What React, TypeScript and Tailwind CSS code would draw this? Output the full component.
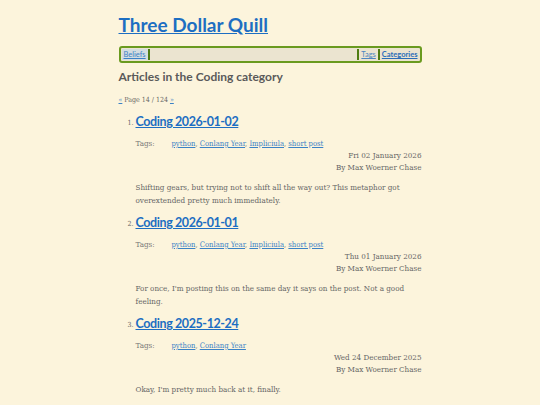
import React from "react";

const heading = { fontFamily: 'Lato, "Open Sans", sans-serif' };
const body = { fontFamily: '"DejaVu Serif Condensed", "DejaVu Serif", serif' };

const posts = [
  {
    title: "Coding 2026-01-02",
    tags: ["python", "Conlang Year", "Impliciula", "short post"],
    date: "Fri 02 January 2026",
    summary:
      "Shifting gears, but trying not to shift all the way out? This metaphor got overextended pretty much immediately.",
  },
  {
    title: "Coding 2026-01-01",
    tags: ["python", "Conlang Year", "Impliciula", "short post"],
    date: "Thu 01 January 2026",
    summary:
      "For once, I'm posting this on the same day it says on the post. Not a good feeling.",
  },
  {
    title: "Coding 2025-12-24",
    tags: ["python", "Conlang Year"],
    date: "Wed 24 December 2025",
    summary: "Okay, I'm pretty much back at it, finally.",
  },
];

function Post({ post, n }: { post: (typeof posts)[number]; n: number }) {
  return (
    <li className="flex">
      <span className="w-[17px] shrink-0 pt-[6px] text-right pr-[2px] text-[7px] text-[#666]" style={body}>
        {n}.
      </span>
      <div className="flex-1">
        <a
          href="#"
          className="block text-[12.5px] font-bold leading-[20px] tracking-[-0.4px] text-[#1d6ec2] underline"
          style={heading}
        >
          {post.title}
        </a>
        <div className="mt-[6px] flex text-[8px] leading-[12px] text-[#777]" style={body}>
          <span className="w-[36px]">Tags:</span>
          <span className="text-[7.6px]">
            {post.tags.map((t, i) => (
              <span key={t}>
                <a href="#" className="text-[#3b82c6] underline">
                  {t}
                </a>
                {i < post.tags.length - 1 ? ", " : ""}
              </span>
            ))}
          </span>
        </div>
        <div className="text-right text-[8px] leading-[12px] text-[#666]" style={body}>
          <div>{post.date}</div>
          <div>By Max Woerner Chase</div>
        </div>
        <p className="mt-[7px] text-[8px] leading-[13px] text-[#666]" style={body}>
          {post.summary}
        </p>
      </div>
    </li>
  );
}

export default function App() {
  return (
    <div className="min-h-[405px] bg-[#fcf4dc]">
      <div className="mx-auto w-[303px] pt-[13px]">
        <a href="#" className="text-[19px] font-bold leading-[24px] text-[#1d6ec2] underline" style={heading}>
          Three Dollar Quill
        </a>
        <nav
          className="mt-[8px] flex h-[17px] items-center rounded-[3px] border-2 border-[#6a9a1f] bg-[#ebe4d0] text-[7.5px]"
          style={heading}
        >
          <a href="#" className="ml-[1px] bg-[#d4dde0] px-[2px] text-[#3b82c6] underline">
            Beliefs
          </a>
          <span className="h-[11px] w-[2px] bg-[#4f7d12]" />
          <div className="flex-1" />
          <span className="h-[11px] w-[2px] bg-[#4f7d12]" />
          <a href="#" className="px-[2px] text-[#4d86c0] underline">
            Tags
          </a>
          <span className="h-[11px] w-[2px] bg-[#4f7d12]" />
          <a href="#" className="px-[2px] font-bold text-[#2a6db8] underline">
            Categories
          </a>
        </nav>
        <h2 className="mt-[6px] text-[12px] font-bold leading-[16px] text-[#5a5a5a]" style={heading}>
          Articles in the Coding category
        </h2>
        <div className="mt-[9px] text-[7px] leading-[12px] text-[#666]" style={body}>
          <a href="#" className="text-[#3b82c6] underline">«</a> Page 14 / 124{" "}
          <a href="#" className="text-[#3b82c6] underline">»</a>
        </div>
        <ol className="mt-[6px] flex flex-col gap-[6px]">
          {posts.map((p, i) => (
            <Post key={p.title} post={p} n={i + 1} />
          ))}
        </ol>
      </div>
    </div>
  );
}
